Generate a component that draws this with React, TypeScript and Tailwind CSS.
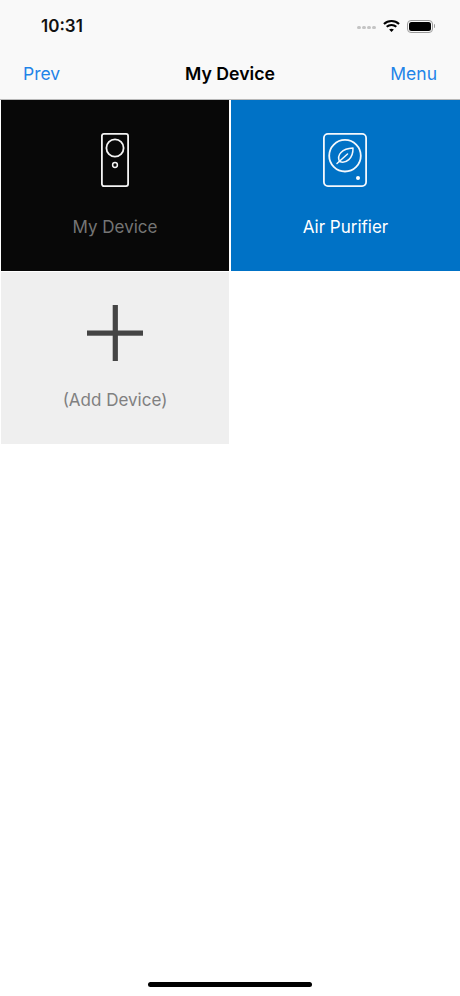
/**
 * My Device screen
 * Nav header with a two-column device grid
 */

function DeviceIcon() {
    return (
        <svg width="30" height="56" viewBox="0 0 30 56" fill="none" stroke="#f4f4f4" strokeWidth="1.8">
            <rect x="1.9" y="1.9" width="26.2" height="52.2" rx="2" />
            <circle cx="15" cy="16" r="8.6" />
            <circle cx="15" cy="33" r="2.4" strokeWidth="1.5" />
        </svg>
    );
}

function PurifierIcon() {
    return (
        <svg className="-ml-px" width="46" height="56" viewBox="0 0 46 56" fill="none" stroke="#f4f8fc" strokeWidth="1.8">
            <rect x="1.9" y="1.9" width="42.2" height="52.2" rx="4" />
            <circle cx="23" cy="23.7" r="15.8" />
            <path d="M17.5 29.5C14.5 23 20 16.5 31 16C31.3 26.5 24 32 17.5 29.5Z" strokeWidth="1.5" strokeLinejoin="round" />
            <path d="M15 31.5L25.5 22" strokeWidth="1.5" strokeLinecap="round" />
            <circle cx="36" cy="46" r="2" fill="#ffffff" stroke="none" />
        </svg>
    );
}

function PlusIcon() {
    return (
        <svg width="56" height="56" viewBox="0 0 56 56" fill="#444444">
            <rect x="25.7" y="0" width="5.2" height="56" />
            <rect x="0" y="25.5" width="56" height="5.2" />
        </svg>
    );
}

function WifiIcon() {
    return (
        <svg width="17" height="14" viewBox="0 0 18 14" fill="none" stroke="#000000" strokeWidth="2.2">
            <path d="M1 4.8C5.5 0.6 12.5 0.6 17 4.8" />
            <path d="M3.9 7.9C6.8 5.3 11.2 5.3 14.1 7.9" />
            <path d="M9 13.4L6.5 10.7C7.9 9.6 10.1 9.6 11.5 10.7Z" fill="#000000" stroke="none" />
        </svg>
    );
}

function Battery() {
    return (
        <div className="flex items-center gap-[1px]">
            <div className="w-[26px] h-[13px] rounded-[4px] border border-[#9a9a9a] p-[1px]">
                <div className="w-full h-full rounded-[2.5px] bg-black" />
            </div>
            <div className="w-[1.5px] h-[4px] rounded-r-sm bg-[#9a9a9a]" />
        </div>
    );
}

export default function App() {
    return (
        <div className="w-[460px] h-[996px] relative bg-white overflow-hidden font-['Inter',sans-serif]">
            {/* Status + nav bar */}
            <header className="h-[100px] bg-[#f9f9f9] border-b border-[#b8b8b8]">
                <div className="h-[52px] pl-[41px] pr-[25px] pt-[14px] flex items-start justify-between">
                    <span className="text-[17px] leading-[24px] font-semibold text-[#111111]">10:31</span>
                    <div className="flex items-center gap-[7px] h-[24px]">
                        <div className="flex gap-[1.5px] mt-[3px]">
                            {[0, 1, 2, 3].map((i) => (
                                <div key={i} className="size-[3.5px] rounded-full bg-[#c4c4c4]" />
                            ))}
                        </div>
                        <WifiIcon />
                        <Battery />
                    </div>
                </div>
                <nav className="h-[47px] px-[23px] flex items-center justify-between relative">
                    <span className="text-[17.5px] text-[#1f84e8] mt-[-3px]">Prev</span>
                    <span className="absolute left-0 right-0 text-center mt-[-3px] text-[17.7px] font-semibold text-black">My Device</span>
                    <span className="text-[17.5px] text-[#1f84e8] mt-[-3px]">Menu</span>
                </nav>
            </header>

            {/* Device grid */}
            <div className="grid grid-cols-[230px_230px] grid-rows-[172px_172px]">
                <div className="ml-[1px] mr-[1px] mb-[1px] bg-[#080808] flex flex-col items-center pt-[32px]">
                    <DeviceIcon />
                    <span className="mt-[28px] text-[17px] leading-[22px] text-[#757575]">My Device</span>
                </div>
                <div className="ml-[1px] mb-[1px] bg-[#0072c6] flex flex-col items-center pt-[32px]">
                    <PurifierIcon />
                    <span className="mt-[28px] text-[17px] leading-[22px] text-white">Air Purifier</span>
                </div>
                <div className="ml-[1px] mr-[1px] bg-[#efefef] flex flex-col items-center pt-[33px]">
                    <PlusIcon />
                    <span className="mt-[28px] text-[17px] leading-[22px] text-[#808080]">(Add Device)</span>
                </div>
            </div>

            {/* Home indicator */}
            <div className="absolute bottom-[9px] left-[148px] w-[164px] h-[5px] rounded-full bg-black" />
        </div>
    );
}
